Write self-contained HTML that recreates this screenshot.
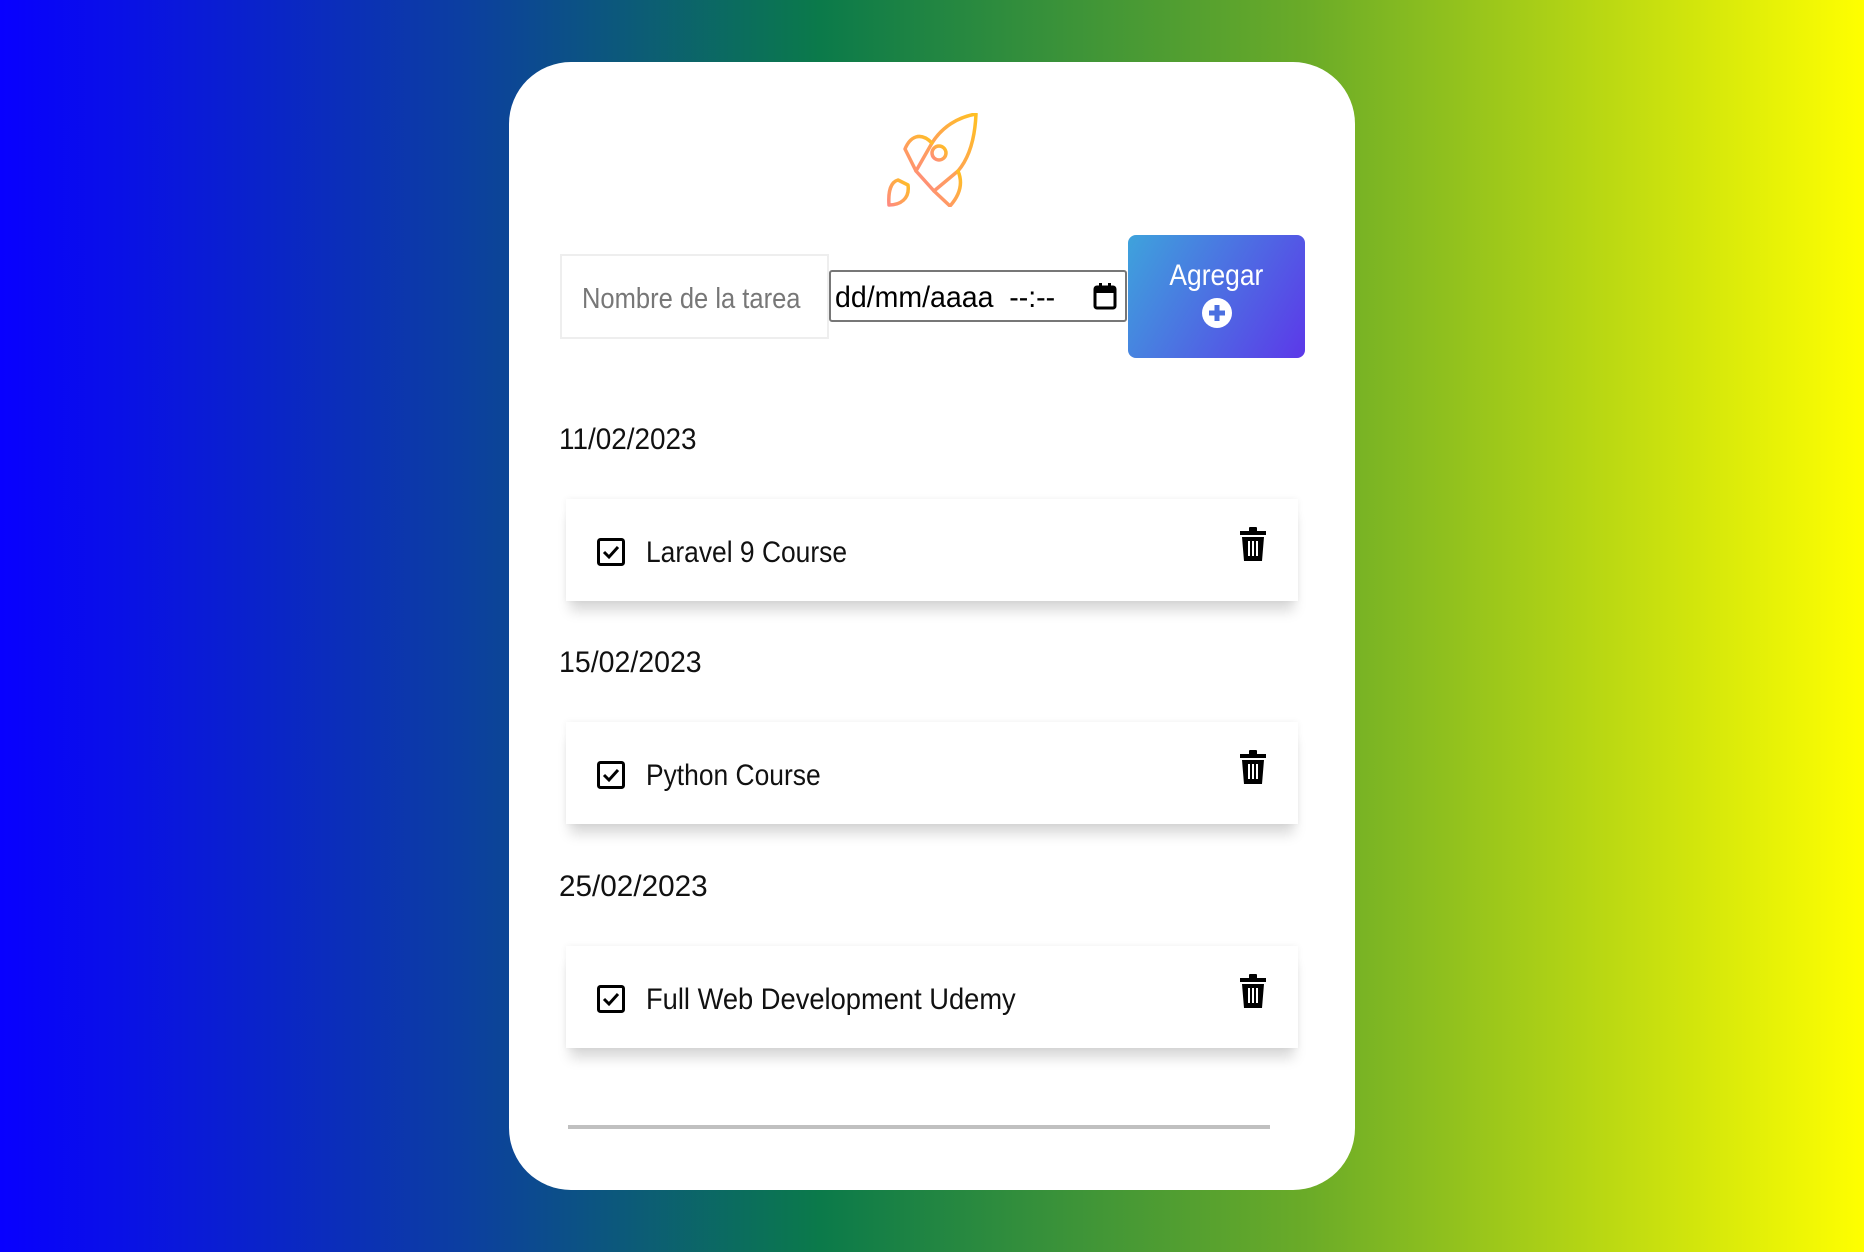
<!DOCTYPE html>
<html><head><meta charset="utf-8"><style>
*{margin:0;padding:0;box-sizing:border-box}
body{width:1864px;height:1252px;overflow:hidden;background:linear-gradient(90deg,#0800ff 0%,#0c3fa0 25%,#0b7a4a 44%,#6aab28 70%,#ffff00 100%);font-family:"Liberation Sans",sans-serif;position:relative}
.card{position:absolute;left:509px;top:62px;width:846px;height:1128px;background:#fff;border-radius:62px}
.abs{position:absolute}
.n{display:inline-block;transform:scaleX(0.88);transform-origin:left center;white-space:nowrap}
.inp{left:560px;top:254px;width:269px;height:85px;border:2px solid #eee;font-size:29px;color:#777;padding:27px 0 0 20px;white-space:nowrap;overflow:hidden}
.date{left:829px;top:270px;width:298px;height:52px;border:2px solid #777;border-radius:3px;font-size:30px;color:#000;padding:9px 0 0 4px;white-space:nowrap}
.btn{left:1128px;top:235px;width:177px;height:123px;border-radius:8px;background:linear-gradient(120deg,#3ea3dc,#5c38e9);color:#fff;text-align:center;font-size:30px;padding-top:24px}
.lbl{left:559px;font-size:30px;color:#111}
.item{left:566px;width:732px;height:102px;background:#fff;box-shadow:0 14px 12px -4px rgba(0,0,0,.15),0 0 6px rgba(0,0,0,.06)}
.item .t{position:absolute;left:80px;top:37px;font-size:30px;color:#111}
.item .cb{position:absolute;left:31px;top:39px}
.item .tr{position:absolute;left:674px;top:28px}
.line{left:568px;top:1125px;width:702px;height:4px;background:#c0c0c0}
</style></head><body>
<div class="card"></div>
<svg class="abs" style="left:886px;top:113px" width="92" height="94" viewBox="0 0 92 94" fill="none" stroke="url(#g)" stroke-width="3.5" stroke-linecap="round" stroke-linejoin="round">
<defs><linearGradient id="g" x1="0" y1="1" x2="1" y2="0"><stop offset="0" stop-color="#ff8a80"/><stop offset="1" stop-color="#ffc022"/></linearGradient></defs>
<path d="M90 1 C72 4 56 14 46 30 L30 58 L48 78 L72 58 C84 44 89 24 90 1 Z"/>
<circle cx="53" cy="40" r="7"/>
<path d="M46 30 C34 18 24 24 19 36 L30 58"/>
<path d="M72 58 C78 72 72 84 64 93 L48 78"/>
<path d="M12 67 C5 69 2 78 3 92 C14 92 24 86 22 72 Z"/>
</svg>
<div class="abs inp"><span class="n">Nombre de la tarea</span></div>
<div class="abs date"><span class="n" style="transform:scaleX(0.95)">dd/mm/aaaa&nbsp; --:--</span>
<svg style="position:absolute;right:8px;top:10px" width="24" height="28" viewBox="0 0 24 28"><rect x="2" y="5" width="20" height="21" rx="2" fill="none" stroke="#000" stroke-width="3"/><rect x="2" y="5" width="20" height="6" fill="#000"/><rect x="6" y="1" width="3" height="6" fill="#000"/><rect x="15" y="1" width="3" height="6" fill="#000"/></svg></div>
<div class="abs btn"><span class="n" style="transform-origin:center">Agregar</span><br>
<svg width="32" height="32" viewBox="0 0 32 32" style="margin-top:4px"><circle cx="16" cy="16" r="15" fill="#fff"/><rect x="8" y="13.5" width="16" height="5" fill="#4a6fe0"/><rect x="13.5" y="8" width="5" height="16" fill="#4a6fe0"/></svg></div>

<div class="abs lbl" style="top:423px"><span class="n" style="transform:scaleX(0.93)">11/02/2023</span></div>
<div class="abs item" style="top:499px"><svg class="cb" width="28" height="28" viewBox="0 0 28 28"><rect x="1.5" y="1.5" width="25" height="25" rx="2" fill="none" stroke="#000" stroke-width="3"/><path d="M7 14l5 5 9-10" fill="none" stroke="#000" stroke-width="3"/></svg><span class="t n">Laravel 9 Course</span><svg class="tr" width="26" height="34" viewBox="0 0 26 34"><rect x="0" y="4" width="26" height="4" fill="#000"/><rect x="9" y="0" width="8" height="5" rx="1" fill="#000"/><path d="M2 10h22l-2 24H4z" fill="#000"/><rect x="8" y="14" width="2" height="15" fill="#fff"/><rect x="12" y="14" width="2" height="15" fill="#fff"/><rect x="16" y="14" width="2" height="15" fill="#fff"/></svg></div>

<div class="abs lbl" style="top:646px"><span class="n" style="transform:scaleX(0.95)">15/02/2023</span></div>
<div class="abs item" style="top:722px"><svg class="cb" width="28" height="28" viewBox="0 0 28 28"><rect x="1.5" y="1.5" width="25" height="25" rx="2" fill="none" stroke="#000" stroke-width="3"/><path d="M7 14l5 5 9-10" fill="none" stroke="#000" stroke-width="3"/></svg><span class="t n">Python Course</span><svg class="tr" width="26" height="34" viewBox="0 0 26 34"><rect x="0" y="4" width="26" height="4" fill="#000"/><rect x="9" y="0" width="8" height="5" rx="1" fill="#000"/><path d="M2 10h22l-2 24H4z" fill="#000"/><rect x="8" y="14" width="2" height="15" fill="#fff"/><rect x="12" y="14" width="2" height="15" fill="#fff"/><rect x="16" y="14" width="2" height="15" fill="#fff"/></svg></div>

<div class="abs lbl" style="top:870px"><span class="n" style="transform:scaleX(0.99)">25/02/2023</span></div>
<div class="abs item" style="top:946px"><svg class="cb" width="28" height="28" viewBox="0 0 28 28"><rect x="1.5" y="1.5" width="25" height="25" rx="2" fill="none" stroke="#000" stroke-width="3"/><path d="M7 14l5 5 9-10" fill="none" stroke="#000" stroke-width="3"/></svg><span class="t n" style="transform:scaleX(0.91)">Full Web Development Udemy</span><svg class="tr" width="26" height="34" viewBox="0 0 26 34"><rect x="0" y="4" width="26" height="4" fill="#000"/><rect x="9" y="0" width="8" height="5" rx="1" fill="#000"/><path d="M2 10h22l-2 24H4z" fill="#000"/><rect x="8" y="14" width="2" height="15" fill="#fff"/><rect x="12" y="14" width="2" height="15" fill="#fff"/><rect x="16" y="14" width="2" height="15" fill="#fff"/></svg></div>

<div class="abs line"></div>
</body></html>
